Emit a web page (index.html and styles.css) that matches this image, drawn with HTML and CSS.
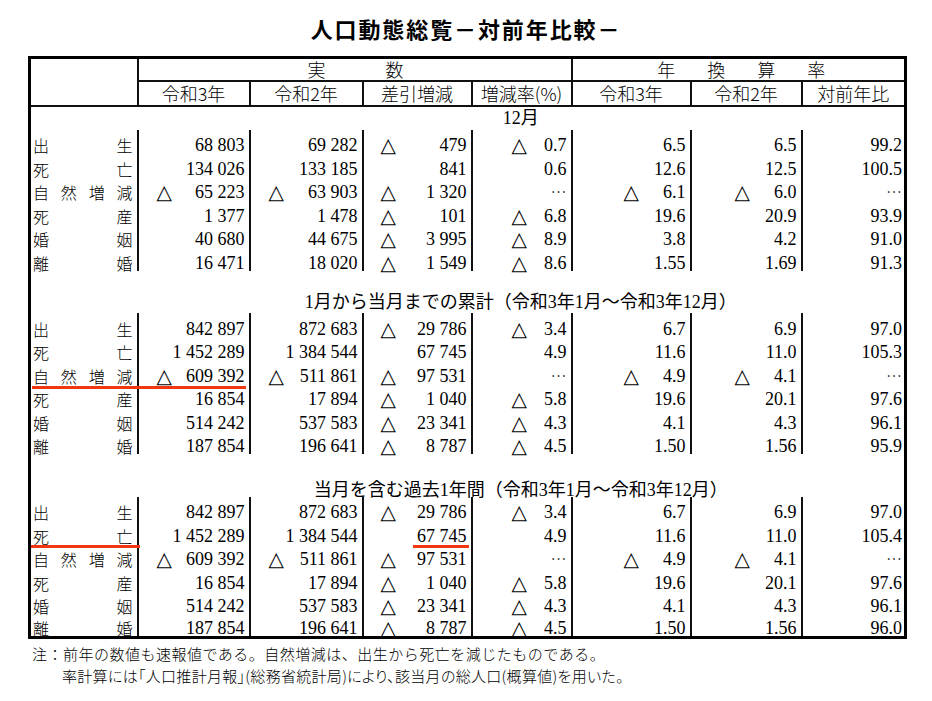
FILE: index.html
```html
<!DOCTYPE html>
<html lang="ja">
<head>
<meta charset="utf-8">
<title>人口動態総覧－対前年比較－</title>
<link rel="stylesheet" href="styles.css">
</head>
<body>
<div class="page">
  <h1 class="title">人口動態総覧－対前年比較－</h1>
  <table class="stats">
    <colgroup>
      <col class="w0"><col class="w1"><col class="w2"><col class="w3"><col class="w4"><col class="w5"><col class="w6"><col class="w7">
    </colgroup>
    <thead>
      <tr class="h1">
        <th class="corner" rowspan="2"></th>
        <th colspan="4"><span class="spread s1"><span>実</span><span>数</span></span></th>
        <th colspan="3"><span class="spread s2"><span>年</span><span>換</span><span>算</span><span>率</span></span></th>
      </tr>
      <tr class="h2">
        <th>令和3年</th><th>令和2年</th><th>差引増減</th><th>増減率(%)</th><th>令和3年</th><th>令和2年</th><th>対前年比</th>
      </tr>
    </thead>
    <tbody>
      <tr class="st first"><td></td><td colspan="7">12月</td></tr>
      <tr class="d"><td class="lb"><div class="lbx"><span>出</span><span>生</span></div></td><td>68 803</td><td>69 282</td><td><div class="cx"><span class="tri">△</span><span>479</span></div></td><td><div class="cx"><span class="tri">△</span><span>0.7</span></div></td><td>6.5</td><td>6.5</td><td>99.2</td></tr>
      <tr class="d"><td class="lb"><div class="lbx"><span>死</span><span>亡</span></div></td><td>134 026</td><td>133 185</td><td>841</td><td>0.6</td><td>12.6</td><td>12.5</td><td>100.5</td></tr>
      <tr class="d"><td class="lb"><div class="lbx"><span>自</span><span>然</span><span>増</span><span>減</span></div></td><td><div class="cx"><span class="tri">△</span><span>65 223</span></div></td><td><div class="cx"><span class="tri">△</span><span>63 903</span></div></td><td><div class="cx"><span class="tri">△</span><span>1 320</span></div></td><td><span class="el">…</span></td><td><div class="cx"><span class="tri">△</span><span>6.1</span></div></td><td><div class="cx"><span class="tri">△</span><span>6.0</span></div></td><td><span class="el">…</span></td></tr>
      <tr class="d"><td class="lb"><div class="lbx"><span>死</span><span>産</span></div></td><td>1 377</td><td>1 478</td><td><div class="cx"><span class="tri">△</span><span>101</span></div></td><td><div class="cx"><span class="tri">△</span><span>6.8</span></div></td><td>19.6</td><td>20.9</td><td>93.9</td></tr>
      <tr class="d"><td class="lb"><div class="lbx"><span>婚</span><span>姻</span></div></td><td>40 680</td><td>44 675</td><td><div class="cx"><span class="tri">△</span><span>3 995</span></div></td><td><div class="cx"><span class="tri">△</span><span>8.9</span></div></td><td>3.8</td><td>4.2</td><td>91.0</td></tr>
      <tr class="d"><td class="lb"><div class="lbx"><span>離</span><span>婚</span></div></td><td>16 471</td><td>18 020</td><td><div class="cx"><span class="tri">△</span><span>1 549</span></div></td><td><div class="cx"><span class="tri">△</span><span>8.6</span></div></td><td>1.55</td><td>1.69</td><td>91.3</td></tr>

      <tr class="sp"><td colspan="8"></td></tr>
      <tr class="st"><td></td><td colspan="7">1月から当月までの累計（令和3年1月～令和3年12月）</td></tr>
      <tr class="d"><td class="lb"><div class="lbx"><span>出</span><span>生</span></div></td><td>842 897</td><td>872 683</td><td><div class="cx"><span class="tri">△</span><span>29 786</span></div></td><td><div class="cx"><span class="tri">△</span><span>3.4</span></div></td><td>6.7</td><td>6.9</td><td>97.0</td></tr>
      <tr class="d"><td class="lb"><div class="lbx"><span>死</span><span>亡</span></div></td><td>1 452 289</td><td>1 384 544</td><td>67 745</td><td>4.9</td><td>11.6</td><td>11.0</td><td>105.3</td></tr>
      <tr class="d"><td class="lb mark-wide"><div class="lbx"><span>自</span><span>然</span><span>増</span><span>減</span></div></td><td><div class="cx"><span class="tri">△</span><span>609 392</span></div></td><td><div class="cx"><span class="tri">△</span><span>511 861</span></div></td><td><div class="cx"><span class="tri">△</span><span>97 531</span></div></td><td><span class="el">…</span></td><td><div class="cx"><span class="tri">△</span><span>4.9</span></div></td><td><div class="cx"><span class="tri">△</span><span>4.1</span></div></td><td><span class="el">…</span></td></tr>
      <tr class="d"><td class="lb"><div class="lbx"><span>死</span><span>産</span></div></td><td>16 854</td><td>17 894</td><td><div class="cx"><span class="tri">△</span><span>1 040</span></div></td><td><div class="cx"><span class="tri">△</span><span>5.8</span></div></td><td>19.6</td><td>20.1</td><td>97.6</td></tr>
      <tr class="d"><td class="lb"><div class="lbx"><span>婚</span><span>姻</span></div></td><td>514 242</td><td>537 583</td><td><div class="cx"><span class="tri">△</span><span>23 341</span></div></td><td><div class="cx"><span class="tri">△</span><span>4.3</span></div></td><td>4.1</td><td>4.3</td><td>96.1</td></tr>
      <tr class="d"><td class="lb"><div class="lbx"><span>離</span><span>婚</span></div></td><td>187 854</td><td>196 641</td><td><div class="cx"><span class="tri">△</span><span>8 787</span></div></td><td><div class="cx"><span class="tri">△</span><span>4.5</span></div></td><td>1.50</td><td>1.56</td><td>95.9</td></tr>

      <tr class="sp"><td colspan="8"></td></tr>
      <tr class="st late"><td></td><td colspan="7">当月を含む過去1年間（令和3年1月～令和3年12月）</td></tr>
      <tr class="d"><td class="lb"><div class="lbx"><span>出</span><span>生</span></div></td><td>842 897</td><td>872 683</td><td><div class="cx"><span class="tri">△</span><span>29 786</span></div></td><td><div class="cx"><span class="tri">△</span><span>3.4</span></div></td><td>6.7</td><td>6.9</td><td>97.0</td></tr>
      <tr class="d"><td class="lb mark-label"><div class="lbx"><span>死</span><span>亡</span></div></td><td>1 452 289</td><td>1 384 544</td><td class="mark-num">67 745</td><td>4.9</td><td>11.6</td><td>11.0</td><td>105.4</td></tr>
      <tr class="d"><td class="lb"><div class="lbx"><span>自</span><span>然</span><span>増</span><span>減</span></div></td><td><div class="cx"><span class="tri">△</span><span>609 392</span></div></td><td><div class="cx"><span class="tri">△</span><span>511 861</span></div></td><td><div class="cx"><span class="tri">△</span><span>97 531</span></div></td><td><span class="el">…</span></td><td><div class="cx"><span class="tri">△</span><span>4.9</span></div></td><td><div class="cx"><span class="tri">△</span><span>4.1</span></div></td><td><span class="el">…</span></td></tr>
      <tr class="d"><td class="lb"><div class="lbx"><span>死</span><span>産</span></div></td><td>16 854</td><td>17 894</td><td><div class="cx"><span class="tri">△</span><span>1 040</span></div></td><td><div class="cx"><span class="tri">△</span><span>5.8</span></div></td><td>19.6</td><td>20.1</td><td>97.6</td></tr>
      <tr class="d"><td class="lb"><div class="lbx"><span>婚</span><span>姻</span></div></td><td>514 242</td><td>537 583</td><td><div class="cx"><span class="tri">△</span><span>23 341</span></div></td><td><div class="cx"><span class="tri">△</span><span>4.3</span></div></td><td>4.1</td><td>4.3</td><td>96.1</td></tr>
      <tr class="d"><td class="lb"><div class="lbx"><span>離</span><span>婚</span></div></td><td>187 854</td><td>196 641</td><td><div class="cx"><span class="tri">△</span><span>8 787</span></div></td><td><div class="cx"><span class="tri">△</span><span>4.5</span></div></td><td>1.50</td><td>1.56</td><td>96.0</td></tr>
    </tbody>
  </table>
  <div class="notes">
    <p class="n1">注：前年の数値も速報値である。自然増減は、出生から死亡を減じたものである。</p>
    <p class="n2">率計算には「人口推計月報」(総務省統計局)により、該当月の総人口(概算値)を用いた。</p>
  </div>
</div>
</body>
</html>
```

FILE: styles.css
```css
html, body {
  margin: 0;
  padding: 0;
  background: #ffffff;
  color: #000000;
}

.page {
  width: 932px;
}

.title {
  margin: 14px 0 0 0;
  height: 28px;
  line-height: 28px;
  text-align: center;
  font-family: "Noto Sans CJK JP", sans-serif;
  font-weight: 700;
  font-size: 22px;
  letter-spacing: 1.9px;
}

.stats {
  margin: 14px 0 0 28px;
  border-collapse: collapse;
  table-layout: fixed;
  width: 879px;
  border: 3px solid #000;
  font-family: "Liberation Serif", "Noto Sans CJK JP", serif;
  font-size: 18px;
}

.w0 { width: 108px; }
.w1 { width: 112px; }
.w2 { width: 113px; }
.w3 { width: 109px; }
.w4 { width: 100px; }
.w5 { width: 119px; }
.w6 { width: 111px; }
.w7 { width: 104px; }

.stats th {
  font-family: "Noto Sans CJK JP", sans-serif;
  font-weight: 300;
  font-size: 18px;
  line-height: 20px;
  padding: 0;
  text-align: center;
  border: 2px solid #111;
  white-space: nowrap;
}

.h1 { height: 23px; }
.h2 { height: 25px; }

.spread {
  display: inline-flex;
  justify-content: center;
}
.s1 { gap: 60px; padding-left: 2px; }
.s2 { gap: 32px; padding-left: 6px; }

.stats td {
  padding: 0;
  line-height: 20px;
  white-space: nowrap;
}

.st { height: 22px; }
.st.first { height: 24px; }
.st td {
  text-align: center;
}
.st.late td {
  vertical-align: bottom;
  line-height: 13px;
}
.sp { height: 20.5px; }

.d { height: 23.5px; }
.d td {
  text-align: right;
  vertical-align: bottom;
  line-height: 16px;
  padding-right: 4px;
  border-right: 2px solid #111;
}
.d td:last-child {
  padding-right: 2px;
}

.lb {
  font-family: "Noto Sans CJK JP", sans-serif;
  font-weight: 300;
  font-size: 16px;
}
.d td.lb {
  padding: 0 4px 0 2px;
}
.lbx {
  display: flex;
  justify-content: space-between;
}

.cx {
  display: flex;
  justify-content: space-between;
}
.tri {
  font-family: "DejaVu Sans", sans-serif;
  font-size: 20px;
}
.d td:nth-child(2) .tri { margin-left: 18px; }
.d td:nth-child(3) .tri { margin-left: 18px; }
.d td:nth-child(4) .tri { margin-left: 17px; }
.d td:nth-child(5) .tri { margin-left: 39px; }
.d td:nth-child(6) .tri { margin-left: 51px; }
.d td:nth-child(7) .tri { margin-left: 43px; }

.el {
  font-family: "Noto Sans CJK JP", sans-serif;
  font-weight: 300;
  font-size: 16px;
}

/* red annotation underlines */
.mark-wide,
.mark-label,
.mark-num {
  position: relative;
}
.mark-wide::after,
.mark-label::after,
.mark-num::after {
  content: "";
  position: absolute;
  height: 3px;
  background: #f2360f;
}
.mark-wide::after {
  left: 1px;
  bottom: -5px;
  width: 214px;
}
.mark-label::after {
  left: 0;
  bottom: -4px;
  width: 109px;
}
.mark-num::after {
  right: 2px;
  bottom: -4px;
  width: 56px;
}

.notes {
  margin: 4px 0 0 32px;
  font-family: "Noto Sans CJK JP", sans-serif;
  font-weight: 300;
  font-size: 15px;
  line-height: 22px;
}
.notes p {
  margin: 0;
  white-space: nowrap;
}
.n1 {
  letter-spacing: 0.5px;
}
.n2 {
  padding-left: 30px;
  letter-spacing: 0.3px;
  font-feature-settings: "palt";
}
```
